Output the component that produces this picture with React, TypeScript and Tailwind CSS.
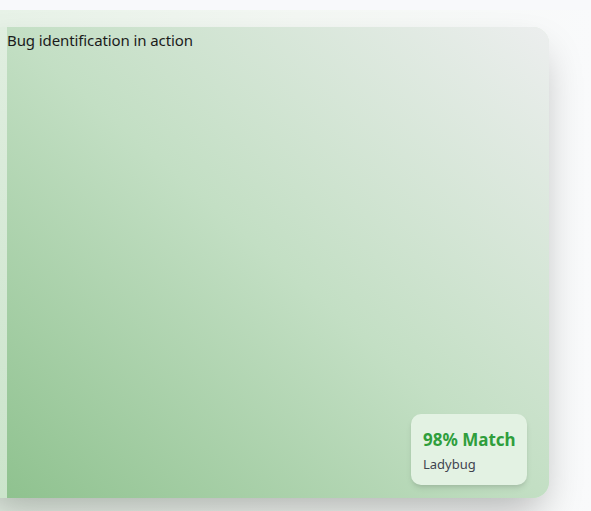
import React from "react";

export default function App() {
  return (
    <div className="min-h-screen bg-[#f8f9fb] overflow-hidden" style={{ fontFamily: '"Noto Sans", "Open Sans", sans-serif' }}>
      <div className="h-[10px]" />
      <section className="bg-gradient-to-r from-[#e7f2e7] via-[#f3f7f3] to-[#f9fafb] pt-[17px] pb-[40px]">
        <div className="relative ml-[-20px] w-[569px] h-[471px] rounded-2xl overflow-hidden shadow-[0_20px_40px_-8px_rgba(0,0,0,0.28)] bg-gradient-to-b from-[#e0eee0] to-[#cbe4cb] flex">
          <div className="w-[27px] shrink-0" />
          <div className="relative flex-1 bg-gradient-to-tr from-[#8fc28f] via-[#c3dfc4] to-[#eceeee]">
            <span className="block text-[15px] leading-[26px] text-[#1b1b1b] tracking-[-0.1px]">Bug identification in action</span>
            <div className="absolute right-[22px] bottom-[13px] w-[116px] h-[71px] rounded-[10px] bg-[#e3f2e3] shadow-md px-3 pt-[14px] whitespace-nowrap">
              <div className="text-[17px] leading-[24px] font-bold text-[#2f9e3c]">98% Match</div>
              <div className="text-[13px] leading-[18px] mt-[3px] text-[#3f4450]">Ladybug</div>
            </div>
          </div>
        </div>
      </section>
    </div>
  );
}
